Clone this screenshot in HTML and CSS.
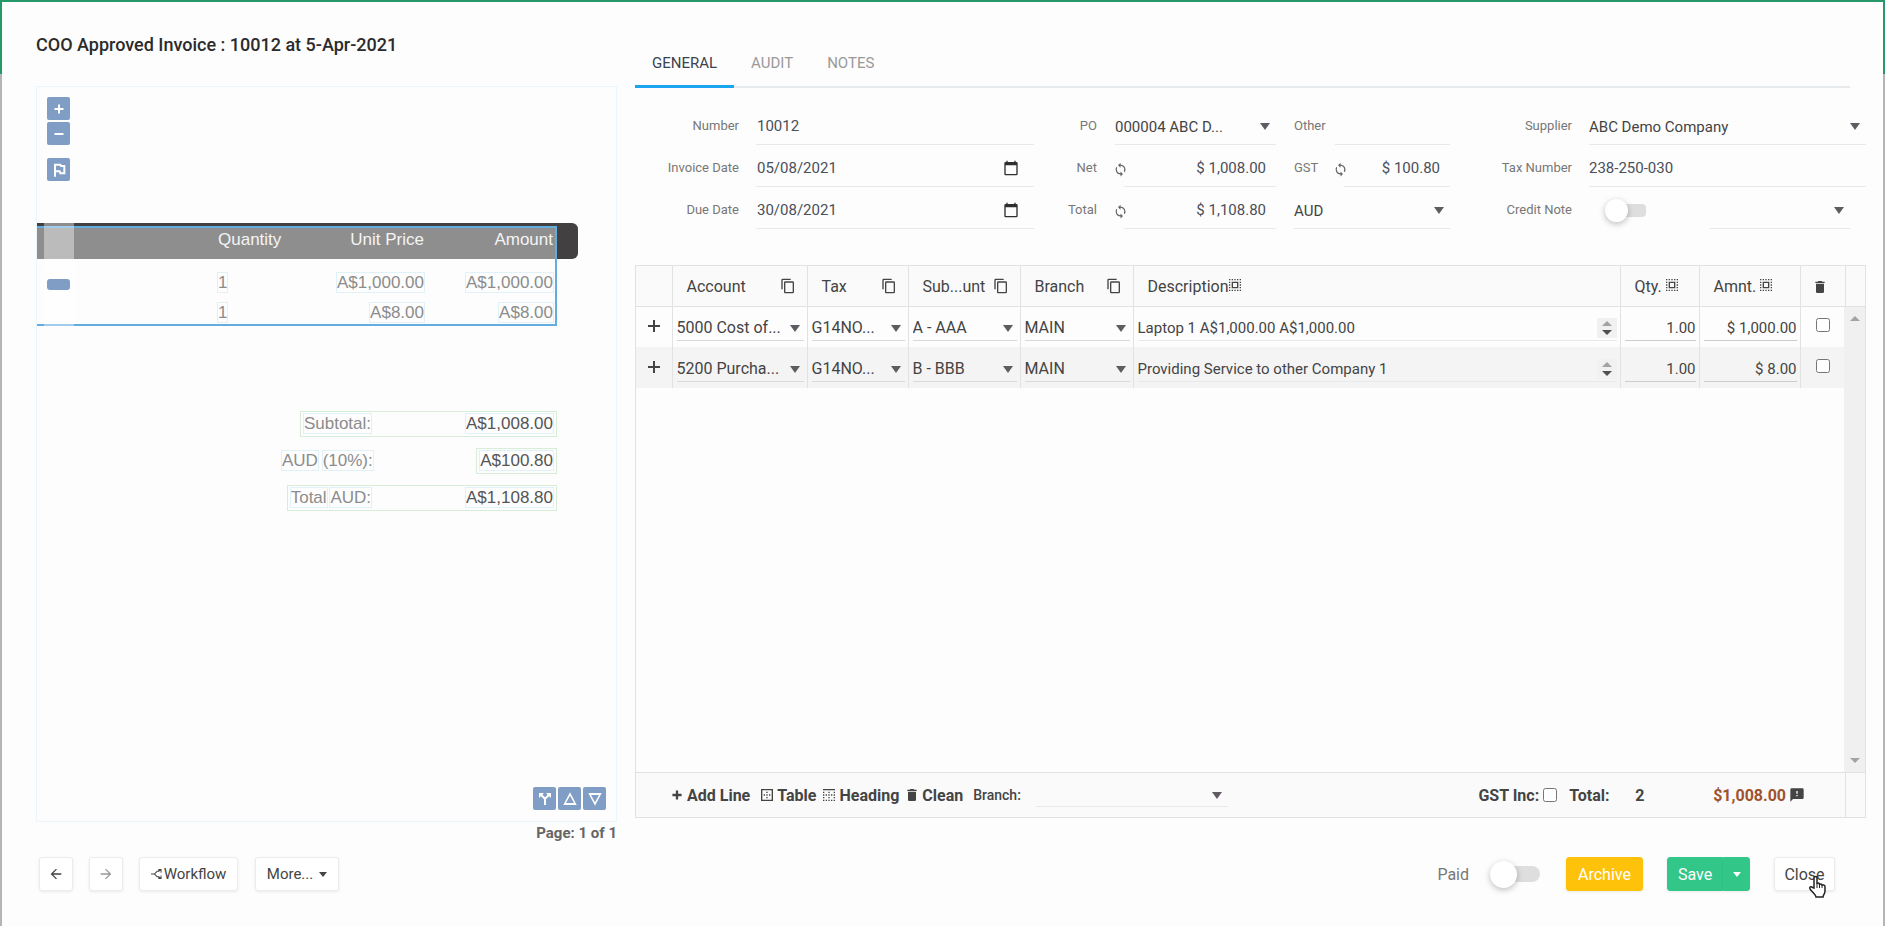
FILE: index.html
```
<!DOCTYPE html>
<html lang="en">
<head>
    <meta charset="UTF-8">
    <meta name="viewport" content="width=device-width, initial-scale=1.0">
    <title>COO Approved Invoice : 10012</title>
    <link rel="stylesheet" href="styles.css">
</head>
<body>
    <!-- Icons -->
    <svg class="sprite" aria-hidden="true">
        <symbol id="i-copy" viewBox="0 0 24 24"><path d="M16 1H4a2 2 0 0 0-2 2v14h2V3h12V1zm3 4H8a2 2 0 0 0-2 2v14c0 1.100.9 2 2 2h11a2 2 0 0 0 2-2V7a2 2 0 0 0-2-2zm0 16H8V7h11v14z"/></symbol>
        <symbol id="i-trash" viewBox="0 0 24 24"><path d="M6 19c0 1.100.9 2 2 2h8a2 2 0 0 0 2-2V7H6v12zM19 4h-3.500l-1-1h-5l-1 1H5v2h14V4z"/></symbol>
        <symbol id="i-select" viewBox="0 0 24 24"><path d="M3 5h2V3H3v2zm0 8h2v-2H3v2zm4 8h2v-2H7v2zM3 9h2V7H3v2zm10-6h-2v2h2V3zm6 0v2h2V3h-2zM3 21h2v-2H3v2zm0-4h2v-2H3v2zM9 3H7v2h2V3zm2 18h2v-2h-2v2zm8-8h2v-2h-2v2zm0 8h2v-2h-2v2zm0-12h2V7h-2v2zm0 8h2v-2h-2v2zm-4 4h2v-2h-2v2zm0-16h2V3h-2v2zM7 17h10V7H7v10zm2-8h6v6H9V9z"/></symbol>
        <symbol id="i-border-outer" viewBox="0 0 24 24"><path d="M13 7h-2v2h2V7zm0 4h-2v2h2v-2zm4 0h-2v2h2v-2zM3 3v18h18V3H3zm16 16H5V5h14v14zm-6-4h-2v2h2v-2zm-4-4H7v2h2v-2z"/></symbol>
        <symbol id="i-border-top" viewBox="0 0 24 24"><path d="M7 21h2v-2H7v2zm0-8h2v-2H7v2zm4 0h2v-2h-2v2zm0 8h2v-2h-2v2zm-8-4h2v-2H3v2zm0 4h2v-2H3v2zm0-8h2v-2H3v2zm0-4h2V7H3v2zm8 8h2v-2h-2v2zm8-8h2V7h-2v2zm0 4h2v-2h-2v2zM3 3v2h18V3H3zm16 14h2v-2h-2v2zm-4 4h2v-2h-2v2zM11 9h2V7h-2v2zm8 12h2v-2h-2v2zm-4-8h2v-2h-2v2z"/></symbol>
        <symbol id="i-sync" viewBox="0 0 24 24"><path d="M12 4V1L8 5l4 4V6a6 6 0 0 1 5.250 8.800l1.460 1.460A8 8 0 0 0 12 4zm0 14a6 6 0 0 1-5.250-8.800L5.290 7.740A8 8 0 0 0 12 20v3l4-4-4-4v3z"/></symbol>
        <symbol id="i-calendar" viewBox="0 0 24 24"><path d="M20 3h-1V1h-2v2H7V1H5v2H4a2 2 0 0 0-2 2v16c0 1.100.9 2 2 2h16a2 2 0 0 0 2-2V5a2 2 0 0 0-2-2zm0 18H4V8h16v13z"/></symbol>
        <symbol id="i-flag" viewBox="0 0 24 24"><path d="M6 22V4h8l1 2h5v11h-6l-1-3H6" fill="none" stroke="currentColor" stroke-width="3"/></symbol>
        <symbol id="i-split" viewBox="0 0 24 24"><path d="M13.500 3l2.500 2.500-4 4-4-4L10.500 3H3v7.500L5.800 7.700l4.700 4.700V21h3v-8.600l4.700-4.700 2.800 2.800V3z"/></symbol>
        <symbol id="i-feedback" viewBox="0 0 24 24"><path d="M20 2H4a2 2 0 0 0-2 2v18l4-4h14a2 2 0 0 0 2-2V4a2 2 0 0 0-2-2zm-7 12h-2v-2h2v2zm0-4h-2V6h2v4z"/></symbol>
        <symbol id="i-arrow" viewBox="0 0 24 24"><path d="M20 11H7.800l5.600-5.600L12 4l-8 8 8 8 1.400-1.400L7.800 13H20v-2z"/></symbol>
    </svg>

    <div class="dialog">
        <div class="content">
            <!-- Scanned document -->
            <section class="preview">
                <h1>COO Approved Invoice : 10012 at 5-Apr-2021</h1>
                <div class="viewer">
                    <div class="zoom-tools">
                        <button class="tool" aria-label="Zoom in"><svg viewBox="0 0 24 24"><path d="M10 3h4v7h7v4h-7v7h-4v-7H3v-4h7z"/></svg></button>
                        <button class="tool" aria-label="Zoom out"><svg viewBox="0 0 24 24"><path d="M3 10h18v4H3z"/></svg></button>
                        <button class="tool flag" aria-label="Flag"><svg class="big"><use href="#i-flag"/></svg></button>
                    </div>
                    <div class="doc">
                        <div class="doc-row doc-head"><span>Quantity</span><span>Unit Price</span><span>Amount</span></div>
                        <div class="doc-row"><span><i>1</i></span><span><i>A$1,000.00</i></span><span><i>A$1,000.00</i></span></div>
                        <div class="doc-row"><span><i>1</i></span><span><i>A$8.00</i></span><span><i>A$8.00</i></span></div>
                        <div class="doc-selection"></div>
                        <div class="doc-strip"></div>
                        <button class="doc-handle" aria-label="Row"></button>
                    </div>
                    <div class="doc-totals">
                        <div class="doc-total boxed"><span><i>Subtotal:</i></span><b><i>A$1,008.00</i></b></div>
                        <div class="doc-total"><span><i>AUD</i> <i>(10%):</i></span><b class="boxed"><i>A$100.80</i></b></div>
                        <div class="doc-total boxed"><span><i>Total</i> <i>AUD:</i></span><b><i>A$1,108.80</i></b></div>
                    </div>
                    <div class="page-tools">
                        <button class="tool" aria-label="Split"><svg class="big"><use href="#i-split"/></svg></button>
                        <button class="tool" aria-label="Previous page"><svg class="big" viewBox="0 0 24 24"><path d="M12 2L2 21h20zM12 7l6 11H6z" fill-rule="evenodd"/></svg></button>
                        <button class="tool" aria-label="Next page"><svg class="big" viewBox="0 0 24 24"><path d="M12 22L2 3h20zM12 17l6-11H6z" fill-rule="evenodd"/></svg></button>
                    </div>
                </div>
                <div class="page-label">Page: 1 of 1</div>
            </section>

            <!-- Invoice details -->
            <section class="details">
                <nav class="tabs">
                    <a href="#general" class="active">GENERAL</a>
                    <a href="#audit">AUDIT</a>
                    <a href="#notes">NOTES</a>
                </nav>

                <form class="form">
                    <div class="form-col col-main">
                        <div class="field"><label for="number">Number</label><input id="number" value="10012"></div>
                        <div class="field"><label for="invDate">Invoice Date</label><div class="date"><input id="invDate" value="05/08/2021"><button type="button" aria-label="Pick invoice date"><svg><use href="#i-calendar"/></svg></button></div></div>
                        <div class="field"><label for="dueDate">Due Date</label><div class="date"><input id="dueDate" value="30/08/2021"><button type="button" aria-label="Pick due date"><svg><use href="#i-calendar"/></svg></button></div></div>
                    </div>
                    <div class="form-col col-po">
                        <div class="field"><label for="po">PO</label><div class="select"><select id="po"><option>000004 ABC D...</option></select></div></div>
                        <div class="field"><label for="net">Net</label><svg class="sync"><use href="#i-sync"/></svg><input class="money" id="net" value="$ 1,008.00"></div>
                        <div class="field"><label for="total">Total</label><svg class="sync"><use href="#i-sync"/></svg><input class="money" id="total" value="$ 1,108.80"></div>
                    </div>
                    <div class="form-col col-gst">
                        <div class="field"><label for="other">Other</label><input id="other"></div>
                        <div class="field"><label for="gst">GST</label><svg class="sync"><use href="#i-sync"/></svg><input class="money" id="gst" value="$ 100.80"></div>
                        <div class="field"><div class="select"><select aria-label="Currency"><option>AUD</option></select></div></div>
                    </div>
                    <div class="form-col col-supplier">
                        <div class="field"><label for="supplier">Supplier</label><div class="select"><select id="supplier"><option>ABC Demo Company</option></select></div></div>
                        <div class="field"><label for="taxNo">Tax Number</label><input id="taxNo" value="238-250-030"></div>
                        <div class="field"><label for="credit">Credit Note</label><input type="checkbox" class="switch small" id="credit"><div class="select credit-ref"><select aria-label="Credit reference"><option></option></select></div></div>
                    </div>
                </form>

                <!-- Invoice lines -->
                <div class="lines">
                    <div class="lines-body">
                        <table>
                            <colgroup>
                                <col class="c-add"><col class="c-account"><col class="c-tax"><col class="c-sub"><col class="c-branch"><col><col class="c-qty"><col class="c-amount"><col class="c-del"><col class="c-scroll">
                            </colgroup>
                            <thead>
                                <tr>
                                    <th></th>
                                    <th><div class="th">Account<svg><use href="#i-copy"/></svg></div></th>
                                    <th><div class="th">Tax<svg><use href="#i-copy"/></svg></div></th>
                                    <th><div class="th">Sub...unt<svg><use href="#i-copy"/></svg></div></th>
                                    <th><div class="th">Branch<svg><use href="#i-copy"/></svg></div></th>
                                    <th><div class="th tight">Description<svg><use href="#i-select"/></svg></div></th>
                                    <th><div class="th tight">Qty. <svg><use href="#i-select"/></svg></div></th>
                                    <th><div class="th tight">Amnt. <svg><use href="#i-select"/></svg></div></th>
                                    <th><svg class="trash"><use href="#i-trash"/></svg></th>
                                    <th></th>
                                </tr>
                            </thead>
                            <tbody>
                                <tr>
                                    <td><button class="expand" aria-label="Expand line"><svg viewBox="0 0 12 12"><path d="M5 0h2v5h5v2H7v5H5V7H0V5h5z"/></svg></button></td>
                                    <td><div class="select"><select aria-label="Account"><option>5000 Cost of...</option></select></div></td>
                                    <td><div class="select"><select aria-label="Tax"><option>G14NO...</option></select></div></td>
                                    <td><div class="select"><select aria-label="Sub account"><option>A - AAA</option></select></div></td>
                                    <td><div class="select"><select aria-label="Branch"><option>MAIN</option></select></div></td>
                                    <td><div class="desc"><input aria-label="Description" value="Laptop 1 A$1,000.00 A$1,000.00"><span class="spin"></span></div></td>
                                    <td><input class="num" aria-label="Quantity" value="1.00"></td>
                                    <td><input class="num" aria-label="Amount" value="$ 1,000.00"></td>
                                    <td><input type="checkbox" aria-label="Delete line"></td>
                                    <td></td>
                                </tr>
                                <tr>
                                    <td><button class="expand" aria-label="Expand line"><svg viewBox="0 0 12 12"><path d="M5 0h2v5h5v2H7v5H5V7H0V5h5z"/></svg></button></td>
                                    <td><div class="select"><select aria-label="Account"><option>5200 Purcha...</option></select></div></td>
                                    <td><div class="select"><select aria-label="Tax"><option>G14NO...</option></select></div></td>
                                    <td><div class="select"><select aria-label="Sub account"><option>B - BBB</option></select></div></td>
                                    <td><div class="select"><select aria-label="Branch"><option>MAIN</option></select></div></td>
                                    <td><div class="desc"><input aria-label="Description" value="Providing Service to other Company 1"><span class="spin"></span></div></td>
                                    <td><input class="num" aria-label="Quantity" value="1.00"></td>
                                    <td><input class="num" aria-label="Amount" value="$ 8.00"></td>
                                    <td><input type="checkbox" aria-label="Delete line"></td>
                                    <td></td>
                                </tr>
                            </tbody>
                        </table>
                        <div class="scrollbar"></div>
                    </div>
                    <div class="lines-footer">
                        <button class="add"><svg viewBox="0 0 14 14"><path d="M6 3h2v3h3v2H8v3H6V8H3V6h3z"/></svg>Add Line</button>
                        <button><svg><use href="#i-border-outer"/></svg>Table</button>
                        <button><svg><use href="#i-border-top"/></svg>Heading</button>
                        <button><svg><use href="#i-trash"/></svg>Clean</button>
                        <label class="branch-label" for="branch">Branch:</label>
                        <div class="select branch"><select id="branch"><option></option></select></div>
                        <label class="gst-inc" for="gstInc">GST Inc:</label><input type="checkbox" id="gstInc">
                        <span class="sum-label">Total:</span>
                        <span class="sum-qty">2</span>
                        <span class="sum-amount">$1,008.00</span>
                        <svg><use href="#i-feedback"/></svg>
                        <span class="footer-end"></span>
                    </div>
                </div>
            </section>
        </div>

        <!-- Actions -->
        <footer class="actions">
            <button class="btn icon" aria-label="Previous"><svg><use href="#i-arrow"/></svg></button>
            <button class="btn icon next" aria-label="Next" disabled><svg><use href="#i-arrow"/></svg></button>
            <button class="btn workflow"><svg viewBox="0 0 24 24"><path d="M0 11h7l6-6h3V1h7v8h-2V5l-4 2h-3l-5 5 5 5h3l4 2v-4h2v8h-7v-4h-3l-6-6H0z"/></svg>Workflow</button>
            <button class="btn more">More...<span class="caret"></span></button>
            <label class="paid" for="paid">Paid</label>
            <input type="checkbox" class="switch" id="paid">
            <button class="btn archive">Archive</button>
            <div class="split">
                <button class="btn save">Save</button>
                <button class="btn save-menu" aria-label="More save options"><span class="caret"></span></button>
            </div>
            <div class="close-wrap">
                <button class="btn close">Close</button>
                <svg class="cursor" viewBox="0 0 19 23"><path d="M6 13V3c0-2 3-2 3 0v6c0-1.500 2.500-1.500 2.500 0v1c0-1.500 2.500-1.500 2.500 0v1c0-1.500 3-1.500 3 0.500V16c0 3-2 4-2 6H8c0-2-3-4-6-8-1-2 1-3 2.500-1.500z" fill="#fff" stroke="#222" stroke-width="1.500"/><path d="M9 9v4M11.500 10v3M14 11v2" stroke="#222" stroke-width="1"/></svg>
            </div>
        </footer>
    </div>
</body>
</html>
```
FILE: styles.css
```
* {
    box-sizing: border-box;
}

body {
    margin: 0;
    font-family: Roboto, "Liberation Sans", sans-serif;
    font-size: 16px;
    color: #444;
    background: linear-gradient(#26996b 74px, #b5b5b5 74px);
}

svg {
    fill: currentColor;
    flex: none;
}

button, input, select {
    font: inherit;
    color: inherit;
}

button {
    border: 0;
    padding: 0;
    background: none;
    cursor: pointer;
}

.sprite {
    display: none;
}

.dialog {
    display: flex;
    flex-direction: column;
    min-height: calc(100vh - 2px);
    margin: 2px 2px 0;
    background: #fdfdfd;
}

.content {
    flex: 1;
    display: flex;
    gap: 18px;
    padding: 0 17px 0 34px;
}

/* Left side: document */
.preview {
    flex: none;
    width: 581px;
    display: flex;
    flex-direction: column;
}

h1 {
    margin: 0;
    height: 84px;
    font-size: 18px;
    font-weight: 500;
    line-height: 86px;
    color: #2b2b2b;
}

.viewer {
    position: relative;
    flex: 1;
    border: 1px solid #ebf5fc;
}

.zoom-tools {
    position: absolute;
    top: 10px;
    left: 10px;
    width: 23px;
}

.page-tools {
    position: absolute;
    right: 10px;
    bottom: 11px;
    display: flex;
    gap: 2px;
}

.tool {
    display: flex;
    align-items: center;
    justify-content: center;
    width: 23px;
    height: 23px;
    margin-bottom: 2px;
    border-radius: 2px;
    color: #fff;
    background: #7f9dc5;
}

.tool svg {
    width: 12px;
    height: 12px;
}

.tool svg.big {
    width: 16px;
    height: 16px;
}

.page-tools .tool {
    margin: 0;
}

.tool.flag {
    margin-top: 13px;
}

.doc, .doc-totals {
    font-family: "Liberation Sans", Arial, sans-serif;
    font-size: 17px;
    color: #8c8c8c;
}

.doc i, .doc-totals i {
    font-style: normal;
    outline: 1px solid #e0f1f8;
}

.doc {
    position: relative;
    margin-top: 136px;
    height: 104px;
}

.doc-row {
    display: grid;
    grid-template-columns: 100px 106px 129px;
    align-items: center;
    height: 30px;
    padding-left: 181px;
}

.doc-row span + span {
    text-align: right;
}

.doc-head {
    width: 541px;
    height: 36px;
    margin-bottom: 9px;
    padding-bottom: 6px;
    border-radius: 0 6px 6px 0;
    color: #f4f4f4;
    background: linear-gradient(90deg, #8e8e8e 519px, #434041 519px);
    border-top: 4px solid #434041;
}

.doc-selection {
    position: absolute;
    top: 3px;
    left: 0;
    width: 520px;
    height: 100px;
    border: 2px solid #62acdf;
    border-left: 0;
}

.doc-strip {
    position: absolute;
    top: 0;
    left: 7px;
    width: 30px;
    height: 103px;
    background: rgba(255, 255, 255, 0.4);
}

.doc-handle {
    position: absolute;
    top: 56px;
    left: 10px;
    width: 23px;
    height: 11px;
    border-radius: 3px;
    background: #7f9dc5;
}

.doc-totals {
    display: flex;
    flex-direction: column;
    align-items: flex-end;
    gap: 11px;
    width: 520px;
    margin-top: 84px;
}

.doc-total {
    display: flex;
    justify-content: space-between;
    align-items: center;
    width: 275px;
    height: 26px;
}

.doc-total.boxed {
    width: auto;
    padding: 0 3px;
    gap: 95px;
}

.boxed {
    border: 1px solid #d7edd7;
}

.doc-total b {
    font-weight: 400;
    color: #555;
}

.doc-total b.boxed {
    padding: 2px 3px;
}

.page-label {
    height: 23px;
    line-height: 23px;
    font-size: 15px;
    font-weight: 700;
    text-align: right;
    color: #666;
}

/* Right side */
.details {
    flex: 1;
    min-width: 0;
    display: flex;
    flex-direction: column;
}

.tabs {
    display: flex;
    height: 86px;
    margin-right: 16px;
    padding-top: 33px;
    border-bottom: 2px solid #e6eaed;
}

.tabs a {
    height: 53px;
    padding: 18px 17px 0;
    line-height: 20px;
    font-size: 15px;
    text-decoration: none;
    color: #999;
}

.tabs a.active {
    color: #3c4250;
    border-bottom: 3px solid #1ba4f0;
}

.form {
    display: grid;
    grid-template-columns: 399fr 242fr 174fr 416fr;
    padding: 15px 0 36px;
    font-size: 15px;
}

.form-col {
    min-width: 0;
}

.field {
    display: flex;
    height: 42px;
    padding-top: 5px;
}

.field label {
    flex: none;
    line-height: 36px;
    font-size: 13px;
    color: #777;
    text-align: right;
}

.field > input:not(.switch), .date, .select {
    flex: 1;
    min-width: 0;
    border: 0;
    border-bottom: 1px solid #e9e9e9;
    padding: 0;
    background: none;
}

.field > input:not(.switch), .date {
    color: #4a4f5a;
}

.col-main label {
    width: 104px;
    margin-right: 17px;
}

.col-main .field input {
    padding-left: 1px;
}

.col-po label {
    width: 63px;
    margin-right: 18px;
}

.col-gst {
    padding-left: 18px;
}

.col-gst label {
    width: 41px;
    text-align: left;
}

.col-supplier label {
    width: 122px;
    margin-right: 17px;
}

.field > input.money {
    margin-left: -4px;
    padding-right: 10px;
    text-align: right;
}

.sync {
    width: 15px;
    height: 15px;
    margin: 12px 0 0 -2px;
    color: #666;
}

.date {
    display: flex;
}

.date input {
    flex: 1;
    min-width: 0;
    border: 0;
    background: none;
}

.date button {
    margin-right: 15px;
}

.date svg {
    display: block;
    width: 16px;
    height: 16px;
    color: #2f2f2f;
}

.select {
    position: relative;
}

.select select {
    width: 100%;
    height: 100%;
    border: 0;
    padding: 2px 20px 0 0;
    appearance: none;
    background: none;
}

.select::after, .caret {
    content: "";
    border: solid transparent;
    border-width: 7px 5px 0;
    border-top-color: #605b62;
}

.select::after {
    position: absolute;
    right: 6px;
    top: 50%;
    margin-top: -3px;
    pointer-events: none;
}

.field .credit-ref {
    flex: none;
    width: 140px;
    margin: 0 16px 0 auto;
}

/* Switch */
.switch {
    position: relative;
    appearance: none;
    width: 50px;
    height: 27px;
    margin: 0;
}

.switch::before {
    content: "";
    position: absolute;
    top: 5px;
    right: 0;
    width: 40px;
    height: 16px;
    border-radius: 8px;
    background: #dedede;
}

.switch::after {
    content: "";
    position: absolute;
    left: 0;
    top: 0;
    width: 27px;
    height: 27px;
    border-radius: 50%;
    background: #fff;
    box-shadow: 0 2px 6px rgba(0, 0, 0, 0.25);
}

.switch.small {
    width: 41px;
    height: 23px;
    margin: 7px 0 0 16px;
}

.switch.small::before {
    width: 30px;
    height: 13px;
    border-radius: 4px;
}

.switch.small::after {
    width: 23px;
    height: 23px;
}

/* Lines table */
.lines {
    flex: 1;
    display: flex;
    flex-direction: column;
    margin-bottom: 27px;
    border: 1px solid #e2e2e2;
}

.lines-body {
    position: relative;
    flex: 1;
}

table {
    width: 100%;
    table-layout: fixed;
    border-collapse: collapse;
}

.c-add { width: 36px; }
.c-account { width: 135px; }
.c-tax { width: 101px; }
.c-sub { width: 112px; }
.c-branch { width: 113px; }
.c-qty { width: 79px; }
.c-amount { width: 101px; }
.c-del { width: 45px; }
.c-scroll { width: 20px; }

th {
    height: 40px;
    padding: 0;
    font-weight: 400;
    background: #fafafa;
    border-bottom: 1px solid #e2e2e2;
}

th + th, td + td {
    border-left: 1px solid #e2e2e2;
}

.th {
    display: flex;
    align-items: center;
    justify-content: space-between;
    padding: 1px 11px 0 14px;
}

.th svg {
    width: 16px;
    height: 16px;
}

.th.tight {
    justify-content: flex-start;
    padding-right: 0;
    white-space: pre;
}

.th.tight svg {
    margin: 0 0 2px -2px;
}

.trash {
    width: 16px;
    height: 16px;
    margin-right: 6px;
    vertical-align: middle;
}

td {
    height: 41px;
    padding: 0 3px 0 4px;
    text-align: center;
}

tbody tr:nth-child(even) {
    background: #f4f4f4;
}

td .select, .desc, .num {
    width: 100%;
    height: 26px;
    margin-top: 3px;
    border: 0;
    border-bottom: 1px solid #d9d9d9;
}

td .select select {
    padding-right: 10px;
    padding-top: 0;
}

td .select::after {
    right: 4px;
}

td .num {
    padding: 0;
    font-size: 15px;
    text-align: right;
    border-color: #ccc;
    background: none;
}

.desc {
    display: flex;
    align-items: center;
    border-color: #e9e9e9;
}

.desc input {
    flex: 1;
    min-width: 0;
    padding: 0;
    border: 0;
    font-size: 15px;
    background: none;
}

.spin {
    display: flex;
    flex-direction: column;
    align-items: center;
    justify-content: center;
    gap: 4px;
    width: 20px;
    height: 20px;
    background: #f1f1f1;
}

.spin::before, .spin::after {
    content: "";
    border: solid transparent;
    border-width: 0 5px 5px;
    border-bottom-color: #a3a3a3;
}

.spin::after {
    border-width: 5px 5px 0;
    border-top-color: #505050;
}

.expand svg {
    display: block;
    width: 12px;
    height: 12px;
}

input[type="checkbox"]:not(.switch) {
    width: 14px;
    height: 14px;
    margin: 0;
}

.scrollbar {
    position: absolute;
    top: 41px;
    right: 0;
    bottom: 0;
    width: 21px;
    display: flex;
    flex-direction: column;
    justify-content: space-between;
    align-items: center;
    padding: 9px 0;
    background: #f0f0f0;
}

.scrollbar::before, .scrollbar::after {
    content: "";
    border: solid transparent;
    border-width: 0 5px 5px;
    border-bottom-color: #a3a3a3;
}

.scrollbar::after {
    border-width: 5px 5px 0;
    border-top-color: #a3a3a3;
}

.lines-footer {
    display: flex;
    align-items: center;
    height: 45px;
    padding-left: 33px;
    font-weight: 700;
    border-top: 1px solid #e2e2e2;
    background: #fafafa;
}

.lines-footer button {
    display: flex;
    align-items: center;
    gap: 2px;
    margin-right: 5px;
    font-weight: 700;
}

.lines-footer .add {
    margin-right: 9px;
}

.lines-footer button svg {
    width: 16px;
    height: 16px;
}

.lines-footer .branch-label {
    margin: 0 15px 0 5px;
    font-size: 14px;
    font-weight: 500;
}

.lines-footer .branch {
    flex: none;
    width: 192px;
    height: 24px;
}

.lines-footer .gst-inc {
    margin: 0 4px 0 auto;
}

.sum-label {
    width: 66px;
    margin-left: 12px;
}

.sum-qty {
    width: 78px;
}

.sum-amount {
    margin-right: 3px;
    color: #a0522d;
}

.lines-footer > svg {
    width: 16px;
    height: 16px;
}

.footer-end {
    align-self: stretch;
    width: 20px;
    margin-left: 40px;
    border-left: 1px solid #e2e2e2;
}

/* Bottom bar */
.actions {
    display: flex;
    align-items: center;
    padding: 12px 48px 35px 37px;
}

.btn {
    display: flex;
    align-items: center;
    justify-content: center;
    height: 34px;
    border: 1px solid #ececec;
    border-radius: 3px;
    background: #fff;
    box-shadow: 0 1px 3px rgba(0, 0, 0, 0.08);
}

.btn.icon {
    width: 34px;
    margin-right: 16px;
}

.btn svg {
    width: 16px;
    height: 16px;
}

.btn.next {
    color: #999;
}

.btn.next svg {
    transform: rotate(180deg);
}

.btn.workflow {
    width: 99px;
    margin-right: 17px;
    gap: 2px;
    font-size: 15px;
}

.btn.workflow svg {
    width: 11px;
    height: 12px;
}

.btn.more {
    width: 84px;
    gap: 6px;
    font-size: 15px;
}

.caret {
    border-width: 5px 4px 0;
    border-top-color: currentColor;
}

.paid {
    margin: 0 21px 0 auto;
    color: #777;
}

.btn.archive {
    width: 77px;
    margin: 0 24px 0 26px;
    color: #fff;
    border-color: #ffc20a;
    background: #ffc20a;
}

.split {
    display: flex;
    margin-right: 24px;
    color: #fff;
}

.btn.save, .btn.save-menu {
    width: 56px;
    border-color: #33c689;
    border-radius: 3px 0 0 3px;
    background: #33c689;
}

.btn.save-menu {
    width: 27px;
    border-radius: 0 3px 3px 0;
}

.close-wrap {
    position: relative;
}

.btn.close {
    width: 61px;
}

.cursor {
    position: absolute;
    left: 34px;
    top: 18px;
    width: 19px;
    height: 23px;
}
```
